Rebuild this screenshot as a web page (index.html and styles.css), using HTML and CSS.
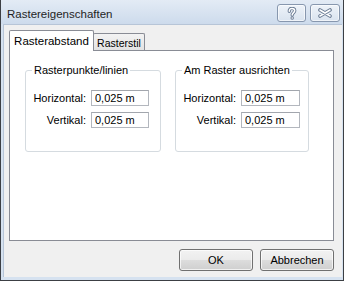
FILE: index.html
```html
<!DOCTYPE html>
<html lang="de">
<head>
<meta charset="utf-8">
<title>Rastereigenschaften</title>
<link rel="stylesheet" href="styles.css">
</head>
<body>
<div class="window">
  <div class="titlebar">
    <span class="title">Rastereigenschaften</span>
    <div class="caption-buttons">
      <button class="cap-btn help" aria-label="Hilfe">
        <svg width="10" height="13" viewBox="0 0 10 13">
          <path d="M2.3 4.2 C2.3 2.2 3.6 1.4 5 1.4 C6.6 1.4 7.7 2.4 7.7 3.8 C7.7 5.6 5.2 5.8 5.2 8" fill="none" stroke="#6b7c94" stroke-width="3.4" stroke-linecap="round"/>
          <circle cx="5.2" cy="11" r="1.7" fill="#6b7c94"/>
          <path d="M2.3 4.2 C2.3 2.2 3.6 1.4 5 1.4 C6.6 1.4 7.7 2.4 7.7 3.8 C7.7 5.6 5.2 5.8 5.2 8" fill="none" stroke="#ffffff" stroke-width="1.5" stroke-linecap="round"/>
          <circle cx="5.2" cy="11" r="0.8" fill="#ffffff"/>
        </svg>
      </button>
      <button class="cap-btn close" aria-label="Schließen">
        <svg width="14" height="10" viewBox="0 0 14 10">
          <path d="M2 2 L12 8 M12 2 L2 8" stroke="#6b7c94" stroke-width="3.6" stroke-linecap="round"/>
          <path d="M2 2 L12 8 M12 2 L2 8" stroke="#ffffff" stroke-width="1.6" stroke-linecap="round"/>
        </svg>
      </button>
    </div>
  </div>
  <div class="client">
    <div class="tabs">
      <div class="tab active">Rasterabstand</div>
      <div class="tab inactive">Rasterstil</div>
    </div>
    <div class="panel">
      <div class="group group-left">
        <span class="legend">Rasterpunkte/linien</span>
        <div class="fields">
          <label class="field-label">Horizontal:</label>
          <input class="field-input" type="text" value="0,025 m">
          <label class="field-label">Vertikal:</label>
          <input class="field-input" type="text" value="0,025 m">
        </div>
      </div>
      <div class="group group-right">
        <span class="legend">Am Raster ausrichten</span>
        <div class="fields">
          <label class="field-label">Horizontal:</label>
          <input class="field-input wide" type="text" value="0,025 m">
          <label class="field-label">Vertikal:</label>
          <input class="field-input wide" type="text" value="0,025 m">
        </div>
      </div>
    </div>
    <div class="button-row">
      <button class="btn">OK</button>
      <button class="btn">Abbrechen</button>
    </div>
  </div>
</div>
</body>
</html>
```

FILE: styles.css
```css
html, body {
  margin: 0;
  padding: 0;
  background: #ffffff;
}

body {
  font-family: "Liberation Sans", Arial, sans-serif;
  font-size: 11px;
  color: #000000;
}

.window {
  width: 344px;
  height: 281px;
  box-sizing: border-box;
  display: flex;
  flex-direction: column;
  background: #d6e2f0;
  border-left: 1px solid #3c3f44;
  border-right: 1px solid #3c3f44;
  border-bottom: 1px solid #3c3f44;
}

.titlebar {
  height: 24px;
  flex: none;
  display: flex;
  align-items: flex-start;
  padding-left: 6px;
  padding-right: 3px;
  background: linear-gradient(#e3ebf5, #cddbec);
}

.title {
  font-size: 11.5px;
  line-height: 24px;
  padding-top: 2px;
  color: #1f1f1f;
}

.caption-buttons {
  margin-left: auto;
  margin-top: 4px;
  display: flex;
  gap: 4px;
}

.cap-btn {
  height: 18px;
  padding: 0;
  margin: 0;
  border: 1px solid #8797ae;
  border-radius: 3px;
  background: linear-gradient(#eef3f9, #d9e3ef);
  box-shadow: inset 0 0 0 1px rgba(255, 255, 255, 0.6);
  display: flex;
  align-items: center;
  justify-content: center;
}

.cap-btn.help {
  width: 29px;
}

.cap-btn.close {
  width: 30px;
}

.client {
  flex: 1;
  display: flex;
  flex-direction: column;
  margin: 0 1px 3px 2px;
  padding: 5px 8px 6px 5px;
  background: #f0f0f0;
  border-top: 1px solid #b7c5d7;
  border-left: 1px solid #b7c5d7;
}

.tabs {
  height: 20px;
  display: flex;
  align-items: flex-end;
}

.tab {
  box-sizing: border-box;
  border: 1px solid #898c95;
  border-bottom: none;
  line-height: 13px;
  text-align: center;
  white-space: nowrap;
  border-radius: 2px 2px 0 0;
}

.tab.active {
  position: relative;
  z-index: 1;
  width: 85px;
  height: 21px;
  margin-bottom: -1px;
  padding-top: 4px;
  font-size: 11.5px;
  background: #ffffff;
}

.tab.inactive {
  width: 52px;
  height: 17px;
  margin-left: -1px;
  padding-top: 3px;
  font-size: 10.5px;
  background: linear-gradient(#f3f3f3, #e3e3e3);
}

.panel {
  box-sizing: border-box;
  width: 325px;
  height: 191px;
  border: 1px solid #898c95;
  background: #ffffff;
  display: flex;
  align-items: flex-start;
  gap: 14px;
  padding: 19px 0 0 15px;
}

.group {
  position: relative;
  box-sizing: border-box;
  height: 82px;
  border: 1px solid #d5dbe0;
  border-radius: 3px;
  padding: 19px 0 0 8px;
}

.group-left {
  width: 136px;
}

.group-right {
  width: 134px;
}

.legend {
  position: absolute;
  top: -7px;
  left: 6px;
  padding: 0 2px;
  background: #ffffff;
  line-height: 13px;
  white-space: nowrap;
}

.fields {
  display: grid;
  grid-template-columns: 52px max-content;
  justify-content: start;
  column-gap: 5px;
  row-gap: 6px;
  align-items: center;
}

.field-label {
  justify-self: end;
  text-align: right;
  line-height: 13px;
  white-space: nowrap;
}

.field-input {
  box-sizing: border-box;
  width: 58px;
  height: 16px;
  margin: 0;
  padding: 0 0 0 3px;
  border: 1px solid #b3b7be;
  border-top-color: #a2a6ad;
  font-family: "Liberation Sans", Arial, sans-serif;
  font-size: 11px;
  line-height: 14px;
  color: #000000;
  background: #ffffff;
  outline: none;
}

.field-input.wide {
  width: 59px;
}

.button-row {
  display: flex;
  justify-content: flex-end;
  gap: 7px;
  margin-top: 8px;
}

.btn {
  box-sizing: border-box;
  width: 74px;
  height: 22px;
  margin: 0;
  padding: 0;
  border: 1px solid #707070;
  border-radius: 3px;
  background: linear-gradient(#f2f2f2 0%, #ebebeb 50%, #dddddd 51%, #cfcfcf 100%);
  box-shadow: inset 0 0 0 1px rgba(255, 255, 255, 0.7);
  font-family: "Liberation Sans", Arial, sans-serif;
  font-size: 11px;
  color: #000000;
}
```
